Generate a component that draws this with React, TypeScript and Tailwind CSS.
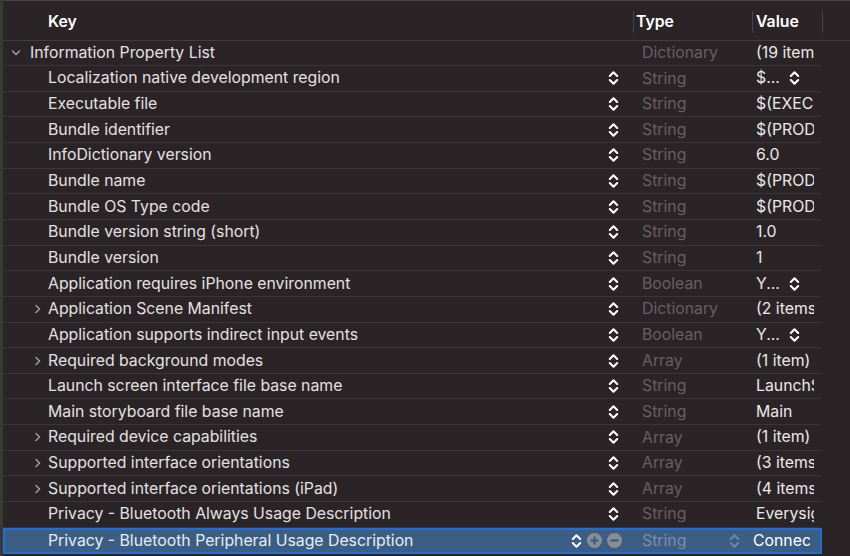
import React from "react";

type Row = {
  key: string;
  type: string;
  value: string;
  root?: boolean;
  closed?: boolean;
  valueStepper?: boolean;
};

const rows: Row[] = [
  { key: "Information Property List", type: "Dictionary", value: "(19 items)", root: true },
  { key: "Localization native development region", type: "String", value: "$...", valueStepper: true },
  { key: "Executable file", type: "String", value: "$(EXECUTABLE_NAME)" },
  { key: "Bundle identifier", type: "String", value: "$(PRODUCT_BUNDLE_IDENTIFIER)" },
  { key: "InfoDictionary version", type: "String", value: "6.0" },
  { key: "Bundle name", type: "String", value: "$(PRODUCT_NAME)" },
  { key: "Bundle OS Type code", type: "String", value: "$(PRODUCT_BUNDLE_PACKAGE_TYPE)" },
  { key: "Bundle version string (short)", type: "String", value: "1.0" },
  { key: "Bundle version", type: "String", value: "1" },
  { key: "Application requires iPhone environment", type: "Boolean", value: "Y...", valueStepper: true },
  { key: "Application Scene Manifest", type: "Dictionary", value: "(2 items)", closed: true },
  { key: "Application supports indirect input events", type: "Boolean", value: "Y...", valueStepper: true },
  { key: "Required background modes", type: "Array", value: "(1 item)", closed: true },
  { key: "Launch screen interface file base name", type: "String", value: "LaunchScreen" },
  { key: "Main storyboard file base name", type: "String", value: "Main" },
  { key: "Required device capabilities", type: "Array", value: "(1 item)", closed: true },
  { key: "Supported interface orientations", type: "Array", value: "(3 items)", closed: true },
  { key: "Supported interface orientations (iPad)", type: "Array", value: "(4 items)", closed: true },
  { key: "Privacy - Bluetooth Always Usage Description", type: "String", value: "Everysight" },
];

const selected: Row = {
  key: "Privacy - Bluetooth Peripheral Usage Description",
  type: "String",
  value: "Connect",
};

function Stepper({ className = "" }: { className?: string }) {
  return (
    <svg width="11" height="16" viewBox="0 0 11 16" className={className}>
      <path d="M1.8 6 L5.5 2.3 L9.2 6" fill="none" stroke="currentColor" strokeWidth="2.1" strokeLinecap="round" strokeLinejoin="round" />
      <path d="M1.8 10 L5.5 13.7 L9.2 10" fill="none" stroke="currentColor" strokeWidth="2.1" strokeLinecap="round" strokeLinejoin="round" />
    </svg>
  );
}

function Chevron({ down = false }: { down?: boolean }) {
  return (
    <svg width="10" height="10" viewBox="0 0 10 10" className="text-[#a9a2a4]">
      {down ? (
        <path d="M1.5 3 L5 6.5 L8.5 3" fill="none" stroke="currentColor" strokeWidth="1.4" strokeLinecap="round" strokeLinejoin="round" />
      ) : (
        <path d="M3 1.5 L6.5 5 L3 8.5" fill="none" stroke="currentColor" strokeWidth="1.4" strokeLinecap="round" strokeLinejoin="round" />
      )}
    </svg>
  );
}

function CircleBtn({ plus }: { plus?: boolean }) {
  return (
    <svg width="15" height="15" viewBox="0 0 15 15">
      <circle cx="7.5" cy="7.5" r="7.5" fill="#8a8d93" />
      <rect x="3.5" y="6.3" width="8" height="2.4" fill="#3d5f86" />
      {plus && <rect x="6.3" y="3.5" width="2.4" height="8" fill="#3d5f86" />}
    </svg>
  );
}

function PlistRow({ row }: { row: Row }) {
  return (
    <div className="flex h-[25.65px] items-center border-b border-[#3c3437] w-[818px]">
      <div className="flex w-[629px] items-center">
        <div className="flex w-[44px] justify-end pr-[4px]">
          {row.root ? null : row.closed ? <Chevron /> : null}
        </div>
        {row.root ? (
          <div className="-ml-[36px] flex items-center gap-[9px]">
            <span className="w-[10px] flex">
              <Chevron down />
            </span>
            <span className="text-[#e4e0e1]">{row.key}</span>
          </div>
        ) : (
          <span className="flex-1 truncate leading-[20px] pl-[1px] text-[#e4e0e1]">{row.key}</span>
        )}
        {!row.root && (
          <div className="w-[30px] flex justify-center pr-[8px] text-white">
            <Stepper />
          </div>
        )}
      </div>
      <div className="w-[119px] pl-[10px] text-[#675f62]">{row.type}</div>
      <div className="flex w-[70px] items-center pl-[5px] text-[#ebe8e9]">
        <span className="overflow-hidden whitespace-nowrap leading-[20px] w-[58px]">{row.value}</span>
        {row.valueStepper && <Stepper className="-ml-[25px] text-white" />}
      </div>
    </div>
  );
}

export default function App() {
  return (
    <div
      className="h-[556px] w-[850px] overflow-hidden bg-[#2b2427] border-l-[3px] border-[#3a3833] text-[15.8px] leading-none"
      style={{ fontFamily: "Inter, 'Noto Sans', sans-serif" }}
    >
      <div className="h-[1px] bg-[#4a4346]" />
      {/* header */}
      <div className="flex h-[39.5px] items-center border-b border-[#443c3f] pt-[3px] font-semibold text-white">
        <div className="w-[630px] pl-[45px]">Key</div>
        <div className="h-[22px] w-px bg-[#4b4346]" />
        <div className="w-[118px] pl-[2px]">Type</div>
        <div className="h-[22px] w-px bg-[#4b4346]" />
        <div className="w-[69px] pl-[3px]">Value</div>
        <div className="h-[22px] w-px bg-[#4b4346]" />
      </div>
      {rows.map((r) => (
        <PlistRow key={r.key} row={r} />
      ))}
      {/* selected row */}
      <div className="flex h-[26px] w-[819px] items-center border-2 border-[#1f6fd6] bg-[#3c5e85]">
        <div className="flex w-[627px] items-center">
          <span className="flex-1 pl-[43px] text-[#e8ecf1]">{selected.key}</span>
          <div className="flex items-center gap-[5px] pr-[10px]">
            <Stepper className="text-white" />
            <CircleBtn plus />
            <CircleBtn />
          </div>
        </div>
        <div className="w-[97px] pl-[10px] text-[#7c8ea6]">{selected.type}</div>
        <Stepper className="text-[#6d87a6]" />
        <div className="w-[70px] overflow-hidden whitespace-nowrap pl-[13px] text-white">{selected.value}</div>
      </div>
    </div>
  );
}
